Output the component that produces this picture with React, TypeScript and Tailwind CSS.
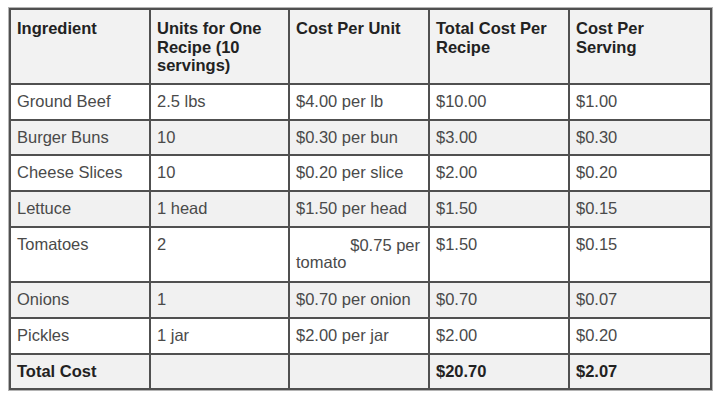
type Row = {
  ingredient: string;
  units: string;
  unitCost: string;
  recipeCost: string;
  servingCost: string;
  shaded: boolean;
  tall?: boolean;
};

const rows: Row[] = [
  { ingredient: "Ground Beef", units: "2.5 lbs", unitCost: "$4.00 per lb", recipeCost: "$10.00", servingCost: "$1.00", shaded: false },
  { ingredient: "Burger Buns", units: "10", unitCost: "$0.30 per bun", recipeCost: "$3.00", servingCost: "$0.30", shaded: true },
  { ingredient: "Cheese Slices", units: "10", unitCost: "$0.20 per slice", recipeCost: "$2.00", servingCost: "$0.20", shaded: false },
  { ingredient: "Lettuce", units: "1 head", unitCost: "$1.50 per head", recipeCost: "$1.50", servingCost: "$0.15", shaded: true },
  { ingredient: "Tomatoes", units: "2", unitCost: "$0.75 per tomato", recipeCost: "$1.50", servingCost: "$0.15", shaded: false, tall: true },
  { ingredient: "Onions", units: "1", unitCost: "$0.70 per onion", recipeCost: "$0.70", servingCost: "$0.07", shaded: true },
  { ingredient: "Pickles", units: "1 jar", unitCost: "$2.00 per jar", recipeCost: "$2.00", servingCost: "$0.20", shaded: false },
];

const headers = [
  ["Ingredient"],
  ["Units for One", "Recipe (10", "servings)"],
  ["Cost Per Unit"],
  ["Total Cost Per", "Recipe"],
  ["Cost Per", "Serving"],
];

const cell =
  "border-2 border-[#505050] align-top pl-[6px] pr-[8px] pt-[7px] text-left";

export default function App() {
  return (
    <div className="min-h-[401px] w-[720px] bg-white pl-[9px] pt-[8px] font-['Liberation_Sans',Arial,sans-serif] text-[16.5px]">
      <table className="w-[701px] table-fixed border-collapse shadow-[0_0_0_1px_#b4b4b4]">
        <colgroup>
          <col className="w-[140px]" />
          <col className="w-[139px]" />
          <col className="w-[140px]" />
          <col className="w-[140px]" />
          <col className="w-[142px]" />
        </colgroup>
        <thead>
          <tr className="h-[75px] bg-[#f2f2f2]">
            {headers.map((lines) => (
              <th
                key={lines[0]}
                className={`${cell} pt-[9px] font-bold leading-[18.5px] text-[#222]`}
              >
                {lines.map((l) => (
                  <div key={l}>{l}</div>
                ))}
              </th>
            ))}
          </tr>
        </thead>
        <tbody className="leading-[18px] text-[#4a4a4a]">
          {rows.map((r) => (
            <tr
              key={r.ingredient}
              className={`${r.tall ? "h-[55.5px]" : "h-[35.7px]"} ${r.shaded ? "bg-[#f1f1f1]" : "bg-white"}`}
            >
              <td className={cell}>{r.ingredient}</td>
              <td className={cell}>{r.units}</td>
              <td className={cell}>
                {r.tall ? (
                  <>
                    <div className="pt-[2px] text-right leading-[17px]">$0.75 per</div>
                    <div className="leading-[17px]">tomato</div>
                  </>
                ) : (
                  r.unitCost
                )}
              </td>
              <td className={cell}>{r.recipeCost}</td>
              <td className={cell}>{r.servingCost}</td>
            </tr>
          ))}
          <tr className="h-[35.7px] bg-[#f1f1f1] font-bold text-[#222]">
            <td className={cell}>Total Cost</td>
            <td className={cell}></td>
            <td className={cell}></td>
            <td className={cell}>$20.70</td>
            <td className={cell}>$2.07</td>
          </tr>
        </tbody>
      </table>
    </div>
  );
}
